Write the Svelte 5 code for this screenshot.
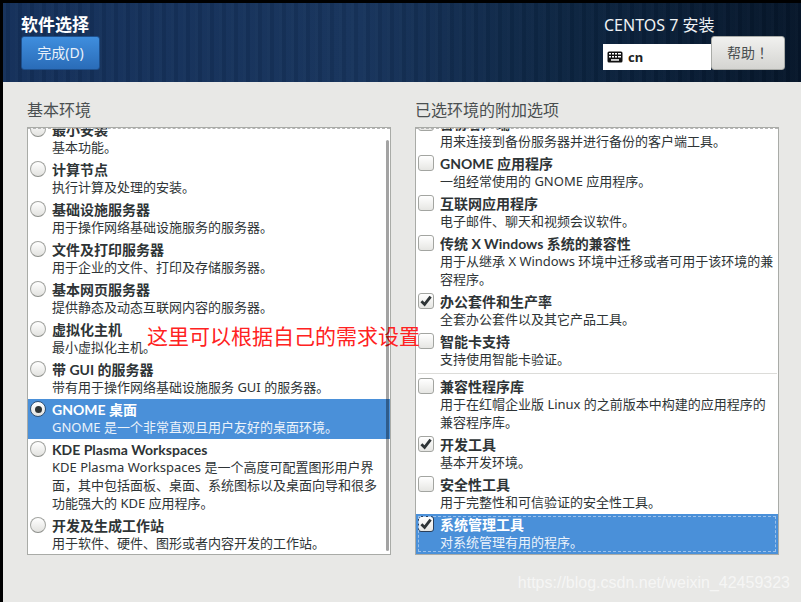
<script>
  const envs = [
    { title: "最小安装", desc: ["基本功能。"] },
    { title: "计算节点", desc: ["执行计算及处理的安装。"] },
    { title: "基础设施服务器", desc: ["用于操作网络基础设施服务的服务器。"] },
    { title: "文件及打印服务器", desc: ["用于企业的文件、打印及存储服务器。"] },
    { title: "基本网页服务器", desc: ["提供静态及动态互联网内容的服务器。"] },
    { title: "虚拟化主机", desc: ["最小虚拟化主机。"] },
    { title: "带 GUI 的服务器", desc: ["带有用于操作网络基础设施服务 GUI 的服务器。"] },
    { title: "GNOME 桌面", desc: ["GNOME 是一个非常直观且用户友好的桌面环境。"], selected: true },
    { title: "KDE Plasma Workspaces", desc: ["KDE Plasma Workspaces 是一个高度可配置图形用户界", "面，其中包括面板、桌面、系统图标以及桌面向导和很多", "功能强大的 KDE 应用程序。"] },
    { title: "开发及生成工作站", desc: ["用于软件、硬件、图形或者内容开发的工作站。"] }
  ];

  const addons = [
    { title: "备份客户端", desc: ["用来连接到备份服务器并进行备份的客户端工具。"] },
    { title: "GNOME 应用程序", desc: ["一组经常使用的 GNOME 应用程序。"] },
    { title: "互联网应用程序", desc: ["电子邮件、聊天和视频会议软件。"] },
    { title: "传统 X Windows 系统的兼容性", desc: ["用于从继承 X Windows 环境中迁移或者可用于该环境的兼", "容程序。"] },
    { title: "办公套件和生产率", desc: ["全套办公套件以及其它产品工具。"], checked: true },
    { title: "智能卡支持", desc: ["支持使用智能卡验证。"], divider: true },
    { title: "兼容性程序库", desc: ["用于在红帽企业版 Linux 的之前版本中构建的应用程序的", "兼容程序库。"] },
    { title: "开发工具", desc: ["基本开发环境。"], checked: true },
    { title: "安全性工具", desc: ["用于完整性和可信验证的安全性工具。"] },
    { title: "系统管理工具", desc: ["对系统管理有用的程序。"], checked: true, selected: true }
  ];
</script>

<div class="page">
  <header class="top">
    <div class="top-left">
      <h1>软件选择</h1>
      <button class="done">完成(D)</button>
    </div>
    <div class="top-right">
      <div class="product">CENTOS 7 安装</div>
      <div class="top-controls">
        <div class="kbd">
          <svg width="16" height="12" viewBox="0 0 16 12">
            <rect x="0.5" y="0.5" width="15" height="11" rx="1.5" fill="#111" />
            <g fill="#fff">
              <rect x="2" y="2" width="2" height="1.5" /><rect x="5" y="2" width="2" height="1.5" />
              <rect x="8" y="2" width="2" height="1.5" /><rect x="11" y="2" width="3" height="1.5" />
              <rect x="2" y="5" width="2" height="1.5" /><rect x="5" y="5" width="2" height="1.5" />
              <rect x="8" y="5" width="2" height="1.5" /><rect x="11" y="5" width="3" height="1.5" />
              <rect x="4" y="8.2" width="8" height="1.5" />
            </g>
          </svg>
          <span>cn</span>
        </div>
        <button class="help">帮助！</button>
      </div>
    </div>
  </header>

  <main class="content">
    <section class="col">
      <h2>基本环境</h2>
      <div class="box">
        <div class="scroll-edge"></div>
        <div class="scrollbar"></div>
        <div class="list env-list">
          {#each envs as env}
            <div class="row" class:selected={env.selected}>
              <span class="radio" class:on={env.selected}></span>
              <div class="text">
                <div class="title">{env.title}</div>
                {#each env.desc as line}
                  <div class="desc">{line}</div>
                {/each}
              </div>
            </div>
          {/each}
        </div>
      </div>
    </section>

    <section class="col">
      <h2>已选环境的附加选项</h2>
      <div class="box">
        <div class="scroll-edge"></div>
        <div class="list addon-list">
          {#each addons as addon}
            <div class="row" class:selected={addon.selected}>
              <span class="check">
                {#if addon.checked}
                  <svg width="14" height="14" viewBox="0 0 14 14">
                    <path d="M2.4 7.2 L5.6 10.4 L11.6 2.6" fill="none" stroke="#2e3436" stroke-width="2.8" />
                  </svg>
                {/if}
              </span>
              <div class="text">
                <div class="title">{addon.title}</div>
                {#each addon.desc as line}
                  <div class="desc">{line}</div>
                {/each}
              </div>
              {#if addon.selected}
                <div class="focus"></div>
              {/if}
            </div>
            {#if addon.divider}
              <div class="divider"></div>
            {/if}
          {/each}
        </div>
      </div>
    </section>
  </main>

  <div class="note">这里可以根据自己的需求设置</div>
  <div class="watermark">https://blog.csdn.net/weixin_42459323</div>
</div>

<style>
  :global(body) {
    background: #000;
  }

  .page {
    position: relative;
    width: 801px;
    height: 602px;
    box-sizing: border-box;
    padding: 3px 0 0 3px;
    background: #000;
    overflow: hidden;
    font-family: "Noto Sans", "Noto Sans CJK SC", sans-serif;
    color: #2e3436;
  }

  .top {
    height: 79px;
    box-sizing: border-box;
    padding: 13px 16px 0 18px;
    display: flex;
    justify-content: space-between;
    background:
      repeating-linear-gradient(90deg, rgba(255, 255, 255, 0.02) 0 3px, rgba(0, 0, 0, 0.06) 3px 7px, rgba(255, 255, 255, 0.012) 7px 12px),
      linear-gradient(90deg, #14305a 0%, #17345c 45%, #0c2440 72%, #06162a 100%);
  }

  h1 {
    margin: 0;
    padding-bottom: 2px;
    font-size: 17px;
    line-height: 18px;
    font-weight: 700;
    color: #fff;
  }

  .done {
    display: block;
    width: 79px;
    height: 34px;
    padding: 0 0 2px;
    border: 1px solid #1d4f8c;
    border-radius: 3px;
    background: linear-gradient(#3f8ede, #2a6cb8);
    color: #e9f1fa;
    font: inherit;
    font-size: 14px;
  }

  .top-right {
    width: 182px;
  }

  .product {
    padding: 0 0 2px 1px;
    font-size: 16px;
    line-height: 18px;
    color: #eef1f4;
  }

  .top-controls {
    display: flex;
    align-items: flex-start;
  }

  .kbd {
    margin-top: 8px;
    width: 108px;
    height: 26px;
    box-sizing: border-box;
    padding-left: 4px;
    display: flex;
    align-items: center;
    gap: 5px;
    background: #fff;
    color: #222;
    font-size: 13px;
    font-weight: 700;
  }

  .help {
    width: 74px;
    height: 34px;
    padding: 0 0 2px;
    border: 1px solid #a9aba7;
    border-radius: 3px;
    background: linear-gradient(#f1f1ef, #d4d4d1);
    color: #4a4f50;
    font-family: "Noto Sans", "Noto Sans CJK TC", sans-serif;
    font-size: 14px;
  }

  .content {
    height: 520px;
    box-sizing: border-box;
    padding: 18px 22px 0 24px;
    display: flex;
    gap: 24px;
    background: #e8e8e6;
  }

  .col {
    width: 364px;
  }

  h2 {
    margin: 0 0 6px;
    font-size: 16px;
    line-height: 21px;
    font-weight: 400;
    color: #4a4f50;
  }

  .box {
    position: relative;
    height: 428px;
    box-sizing: border-box;
    border: 1px solid #a9aba7;
    background: #fff;
    overflow: hidden;
  }

  .scroll-edge {
    position: absolute;
    z-index: 2;
    top: 0;
    left: 0;
    right: 0;
    border-top: 1px dashed #b5b5b5;
  }

  .scrollbar {
    position: absolute;
    z-index: 2;
    top: 12px;
    right: 1px;
    bottom: 3px;
    width: 3px;
    border-radius: 2px;
    background: rgba(0, 0, 0, 0.36);
  }

  .list {
    font-size: 13px;
  }

  .env-list {
    margin-top: -9px;
  }

  .addon-list {
    margin-top: -15px;
  }

  .row {
    position: relative;
    display: flex;
    padding-left: 2px;
  }

  .row.selected {
    background: #4a90d9;
    color: #fff;
  }

  .row.selected .desc {
    color: #eaf2fb;
  }

  .text {
    padding: 1px 0 3px;
    min-width: 0;
  }

  .title {
    padding-top: 1px;
    font-family: Lato, "Noto Sans CJK SC", sans-serif;
    font-weight: 700;
    line-height: 17px;
    font-size: 14px;
    white-space: nowrap;
  }

  .desc {
    line-height: 18px;
    white-space: nowrap;
    color: #2e3436;
  }

  .radio {
    flex: none;
    box-sizing: border-box;
    width: 16px;
    height: 16px;
    margin: 2px 6px 0 0;
    border: 1px solid #a3a5a1;
    border-bottom-color: #8c8e8a;
    border-radius: 50%;
    background: linear-gradient(#fff, #e2e2df);
    display: flex;
    align-items: center;
    justify-content: center;
  }

  .radio.on {
    border-color: #2f4f73;
  }

  .radio.on::after {
    content: "";
    width: 7px;
    height: 7px;
    border-radius: 50%;
    background: #2e3436;
  }

  .check {
    flex: none;
    box-sizing: border-box;
    width: 16px;
    height: 16px;
    margin: 2px 6px 0 0;
    border: 1px solid #a3a5a1;
    border-radius: 3px;
    background: linear-gradient(#fff, #e6e6e3);
    display: flex;
    align-items: center;
    justify-content: center;
  }

  .row.selected .check {
    border-color: #2a3f5a;
  }

  .divider {
    height: 1px;
    margin: 2px 1px 2px 2px;
    background: #dcdcd9;
  }

  .focus {
    position: absolute;
    inset: 2px;
    border: 1px dashed #9cc1ea;
    pointer-events: none;
  }

  .note {
    position: absolute;
    left: 147px;
    top: 323px;
    font-size: 21px;
    line-height: 26px;
    color: #f22;
    white-space: nowrap;
  }

  .watermark {
    position: absolute;
    right: 11px;
    top: 574px;
    font-family: "Liberation Sans", sans-serif;
    font-size: 16px;
    line-height: 18px;
    color: rgba(255, 255, 255, 0.62);
    white-space: nowrap;
  }
</style>
